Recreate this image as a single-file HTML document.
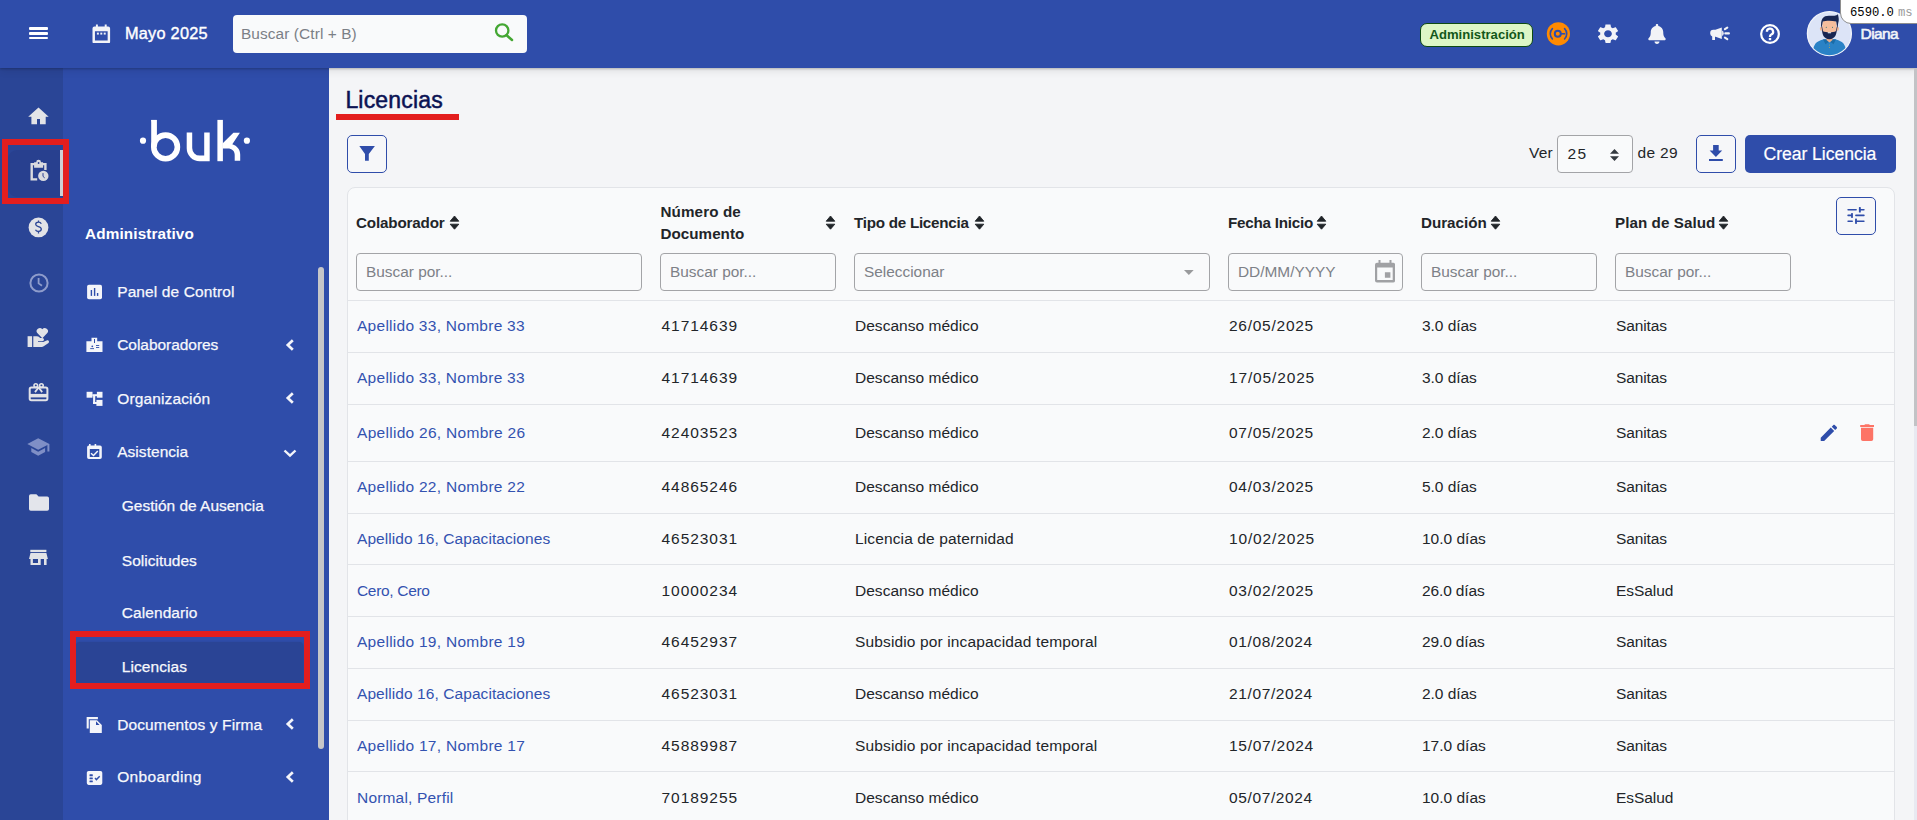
<!DOCTYPE html>
<html lang="es"><head><meta charset="utf-8"><title>Licencias</title>
<style>
html,body{margin:0;padding:0;width:1917px;height:820px;overflow:hidden;background:#F4F5F7;font-family:"Liberation Sans",sans-serif;}
.t{position:absolute;white-space:nowrap;line-height:1;}
#hdr{position:absolute;left:0;top:0;width:1917px;height:68px;background:#2F4DAA;box-shadow:0 1px 2px rgba(0,0,0,.22),0 3px 8px rgba(0,0,0,.09);z-index:0}
#rail{position:absolute;left:0;top:68px;width:63px;height:752px;background:#2A4596}
#side{position:absolute;left:63px;top:68px;width:266px;height:752px;background:#2F4DAA}
#main{position:absolute;left:329px;top:68px;width:1588px;height:752px;background:#F4F5F7}
.btno{position:absolute;border:1px solid #2F4DAA;border-radius:5px;background:#F6F7F9}
</style></head><body>
<div id="rail"></div><div id="side"></div><div id="main"></div><div id="hdr"></div><div style="position:absolute;left:29.4px;top:27.4px;width:18.4px;height:2.5px;background:#fff;border-radius:1px"></div><div style="position:absolute;left:29.4px;top:32.2px;width:18.4px;height:2.5px;background:#fff;border-radius:1px"></div><div style="position:absolute;left:29.4px;top:36.9px;width:18.4px;height:2.5px;background:#fff;border-radius:1px"></div><svg style="position:absolute;left:92.2px;top:23.6px" width="18.6" height="19.6" viewBox="0 0 19 20" preserveAspectRatio="none">
<path fill="#F2F3F7" d="M4 0.5h2v2h7v-2h2v2h1.5a2 2 0 0 1 2 2v13.5a2 2 0 0 1-2 2h-14a2 2 0 0 1-2-2v-13.5a2 2 0 0 1 2-2h1.5z M3 7.3v9.6h13v-9.6z"/>
<rect x="5" y="8.8" width="2" height="2" fill="#F2F3F7"/><rect x="8.5" y="8.8" width="2" height="2" fill="#F2F3F7"/><rect x="12" y="8.8" width="2" height="2" fill="#F2F3F7"/>
</svg><div class="t" style="left:125px;top:25px;font-size:16.3px;color:#fff;font-weight:normal;-webkit-text-stroke:0.4px #fff;letter-spacing:0.250px;">Mayo 2025</div>
<div style="position:absolute;left:233px;top:15px;width:294px;height:38px;background:#F9FAFB;border-radius:4px"></div><div class="t" style="left:241px;top:26px;font-size:15.4px;color:#7B7F86;font-weight:normal;letter-spacing:0.097px;">Buscar (Ctrl + B)</div>
<svg style="position:absolute;left:494px;top:22px" width="21" height="21" viewBox="0 0 21 21">
<circle cx="8.2" cy="8.5" r="6.2" fill="none" stroke="#44A733" stroke-width="2.3"/>
<path d="M12.6 13.3l5.4 4.7" stroke="#44A733" stroke-width="2.5" stroke-linecap="round"/>
</svg><div style="position:absolute;left:1419.5px;top:23.2px;width:111px;height:21.4px;background:#DDF6C6;border:1px solid #0E4A12;border-radius:7px"></div><div class="t" style="left:1429.5px;top:28px;font-size:13.1px;color:#13571A;font-weight:bold;">Administración</div>
<svg style="position:absolute;left:0;top:0" width="1917" height="68">
<circle cx="1558.4" cy="33.8" r="11.6" fill="#FF8A00"/>
<path d="M1552.4 28.6a7.4 7.4 0 0 0 0 10.4 M1564.6 28.6a7.4 7.4 0 0 1 0 10.4" fill="none" stroke="#2F4DAA" stroke-width="1.6" stroke-linecap="round"/>
<circle cx="1557.8" cy="33.8" r="3" fill="none" stroke="#2F4DAA" stroke-width="2"/>
<path d="M1560.8 33.8h4.5" stroke="#2F4DAA" stroke-width="1.6"/>
</svg><svg style="position:absolute;left:1597.7px;top:23.9px" width="20" height="19.4" viewBox="2.74 2 18.52 20" preserveAspectRatio="none">
<path fill="#F2F3F7" d="M19.14 12.94c.04-.3.06-.61.06-.94 0-.32-.02-.64-.07-.94l2.03-1.58c.18-.14.23-.41.12-.61l-1.92-3.32c-.12-.22-.37-.29-.59-.22l-2.39.96c-.5-.38-1.03-.7-1.62-.94l-.36-2.54c-.04-.24-.24-.41-.48-.41h-3.84c-.24 0-.43.17-.47.41l-.36 2.54c-.59.24-1.13.57-1.62.94l-2.39-.96c-.22-.08-.47 0-.59.22L2.74 8.87c-.12.21-.08.47.12.61l2.03 1.58c-.05.3-.09.63-.09.94s.02.64.07.94l-2.03 1.58c-.18.14-.23.41-.12.61l1.92 3.32c.12.22.37.29.59.22l2.39-.96c.5.38 1.03.7 1.62.94l.36 2.54c.05.24.24.41.48.41h3.84c.24 0 .44-.17.47-.41l.36-2.54c.59-.24 1.13-.56 1.62-.94l2.39.96c.22.08.47 0 .59-.22l1.92-3.32c.12-.22.07-.47-.12-.61l-2.01-1.58zM12 15.6c-1.98 0-3.6-1.62-3.6-3.6s1.62-3.6 3.6-3.6 3.6 1.62 3.6 3.6-1.62 3.6-3.6 3.6z"/>
</svg><svg style="position:absolute;left:1648px;top:23.5px" width="18" height="20" viewBox="0 0 448 512">
<path fill="#F2F3F7" d="M224 512c35.32 0 63.97-28.65 63.97-64H160.03c0 35.35 28.65 64 63.97 64zm215.39-149.71c-19.32-20.76-55.47-51.99-55.47-154.29 0-77.7-54.48-139.9-127.94-155.16V32c0-17.67-14.32-32-31.98-32s-31.98 14.33-31.98 32v20.84C118.56 68.1 64.08 130.3 64.08 208c0 102.3-36.15 133.53-55.47 154.29-6 6.45-8.66 14.16-8.61 21.71.11 16.4 12.98 32 32.1 32h383.8c19.12 0 32-15.6 32.1-32 .05-7.55-2.61-15.27-8.61-21.71z"/>
</svg><svg style="position:absolute;left:1710px;top:25.5px" width="21" height="16" viewBox="0 0 21 16">
<path fill="#F2F3F7" d="M0.2 7a3.2 3.2 0 0 1 3.2-3.2h2l6.4-2.3v11.6l-6.2-2.4h-0.6v3.3h-2.8v-3.6a3.2 3.2 0 0 1-2-3z"/>
<path fill="#DDE0EA" d="M12 4.6a2.9 2.9 0 0 1 0 5.4z"/>
<path d="M14.9 3.2l2.4-1.6M15.3 7.4h3.6M14.9 11.6l2.4 1.6" stroke="#F2F3F7" stroke-width="2.1" stroke-linecap="round"/>
</svg><svg style="position:absolute;left:1759.5px;top:23.7px" width="20" height="20" viewBox="0 0 20 20">
<circle cx="10" cy="10" r="8.85" fill="none" stroke="#fff" stroke-width="2.2"/>
<path d="M6.9 7.7a3.1 3.1 0 1 1 4.4 2.8c-.9.4-1.3 1-1.3 1.9v.5" fill="none" stroke="#fff" stroke-width="2.3"/>
<rect x="8.8" y="14" width="2.4" height="2.2" fill="#fff"/>
</svg><svg style="position:absolute;left:0;top:0" width="1917" height="68">
<defs><clipPath id="av"><circle cx="1829.4" cy="33.6" r="21.6"/></clipPath></defs>
<circle cx="1829.4" cy="33.6" r="22" fill="#DCE4F7" stroke="#F0F3FA" stroke-width="1.3"/>
<g clip-path="url(#av)">
<path d="M1812 58 C1812.5 44 1816 41.5 1823 39.5 h13 C1843 41.5 1846.5 44 1847 58z" fill="#2A82C6"/>
<path d="M1823 39.3 h13 l-2.5 5 l-4-3 l-4 3z" fill="#1A6CA8"/>
<circle cx="1829.4" cy="45" r="0.5" fill="#C9A94A"/><circle cx="1829.4" cy="47.5" r="0.5" fill="#C9A94A"/>
<path d="M1826.5 35h6v5l-3 2.5-3-2.5z" fill="#EBAE8C"/>
<ellipse cx="1821.3" cy="28.8" rx="1.4" ry="2" fill="#EFB493"/><ellipse cx="1837.5" cy="28.8" rx="1.4" ry="2" fill="#EFB493"/>
<rect x="1822.3" y="18.5" width="14.2" height="18" rx="6" fill="#F5BD9C"/>
<path d="M1822 26 C1821.5 35 1824 39 1829.4 39.2 C1834.8 39 1837.3 35 1836.8 26 L1835.8 31.2 C1833 32.5 1826 32.5 1823 31.2z" fill="#182652"/>
<path d="M1821.3 29 C1820 18 1823.5 15.6 1829.5 15.8 C1833.5 15.6 1836 16 1838 14.2 C1838.3 17 1839.5 19 1838.2 23 L1837.5 29 L1836.2 21.5 C1832 20.5 1826 20.5 1822.8 21.5z" fill="#182652"/>
<rect x="1827.7" y="32.3" width="3.4" height="1" rx="0.5" fill="#fff"/>
<circle cx="1826.3" cy="27.2" r="0.55" fill="#1F6E70"/><circle cx="1832.5" cy="27.2" r="0.55" fill="#1F6E70"/>
</g></svg><div class="t" style="left:1860.6px;top:26px;font-size:15.5px;color:#F2F3F8;font-weight:normal;-webkit-text-stroke:0.6px #F2F3F8;letter-spacing:-0.644px;">Diana</div>
<div style="position:absolute;left:1840px;top:-1px;width:80px;height:23px;background:#fff;border:1px solid #8E8E8E;border-radius:0 0 0 11px;"></div><div class="t" style="left:1850px;top:7px;font-size:12.2px;color:#000;font-weight:normal;font-family:'Liberation Mono',monospace;">6590.0<span style="color:#9A9A9A;margin-left:4px">ms</span></div>
<div style="position:absolute;left:8px;top:149.5px;width:55px;height:47px;background:#28408F;border-radius:9px 0 0 9px"></div><div style="position:absolute;left:59.5px;top:150px;width:3px;height:46px;background:#CFCFD3"></div><svg style="position:absolute;left:0;top:0" width="63" height="600"><path fill="#E2E3E7" d="M38.5 107.4 L28.2 116.8 h3.2 v7.5 h5.6 v-5.4 h3 v5.4 h5.7 v-7.5 h3z"/></svg><svg style="position:absolute;left:0;top:0" width="63" height="600">
<path fill="none" stroke="#DADBDF" stroke-width="2.4" d="M35 164.1h-3.3v15.3h5.5 M42 164.1h3.4v5.9"/>
<path fill="#DADBDF" d="M36.2 162.2a2.4 2.4 0 0 1 4.8 0h2.1v5.6h-9v-5.6z"/>
<circle cx="38.6" cy="163" r="0.9" fill="#2A4093"/>
<circle cx="43.3" cy="175.9" r="5.2" fill="#DADBDF"/>
<path d="M43 173.1v3.3l1.7 1.5" fill="none" stroke="#2A4093" stroke-width="1"/>
</svg><svg style="position:absolute;left:0;top:0" width="63" height="600">
<circle cx="38.5" cy="227.4" r="9.9" fill="#E2E3E7"/>
<path d="M41.3 223.8c-.5-1-1.5-1.7-2.8-1.7-1.6 0-2.8.9-2.8 2.2 0 2.9 5.6 1.7 5.6 4.8 0 1.3-1.2 2.4-2.9 2.4-1.4 0-2.5-.7-2.9-1.7M38.5 220.5v1.6M38.5 232v1.6" fill="none" stroke="#2A4596" stroke-width="1.3"/>
</svg><svg style="position:absolute;left:28.5px;top:272.5px" width="20" height="20" viewBox="0 0 20 20">
<circle cx="10" cy="10" r="8.6" fill="none" stroke="#8E9CCB" stroke-width="2"/>
<path d="M9.6 5v5.4l3.4 2.4" fill="none" stroke="#8E9CCB" stroke-width="1.8"/>
</svg><svg style="position:absolute;left:0;top:0" width="63" height="600">
<path fill="#E2E3E7" d="M42.3 338.3 l-5-5.2 a2.9 2.9 0 0 1 5-3.8 a2.9 2.9 0 0 1 5 3.8z"/>
<rect x="27.6" y="336.2" width="4.5" height="10.8" fill="#E2E3E7"/>
<path fill="#E2E3E7" d="M33.3 336.3h3.8c1.2 0 2.3.9 2.9 1.6h2.3a1.7 1.7 0 0 1 0 3.4h-4.3v.6h5.2l4-1.6a1.5 1.5 0 0 1 1.3 2.6l-4.8 3.3a3.6 3.6 0 0 1-2 .7h-8.4z"/>
</svg><svg style="position:absolute;left:0;top:0" width="63" height="600">
<rect x="29.7" y="387.6" width="17.7" height="12.6" rx="1.6" fill="none" stroke="#E2E3E7" stroke-width="2"/>
<rect x="29.7" y="393.9" width="17.7" height="3.5" fill="#E2E3E7"/>
<circle cx="35.8" cy="385.6" r="1.8" fill="none" stroke="#E2E3E7" stroke-width="1.6"/>
<circle cx="41.4" cy="385.6" r="1.8" fill="none" stroke="#E2E3E7" stroke-width="1.6"/>
<path d="M38.6 387.5l-3.6 4.6 M38.6 387.5l3.6 4.6" stroke="#E2E3E7" stroke-width="1.8"/>
</svg><svg style="position:absolute;left:27px;top:438px" width="23" height="18" viewBox="0 0 23 18">
<path fill="#7F8FC6" d="M11.2 0.3 L0.3 6 l10.9 5.7 l9.2-4.8 v6.6 h2 v-7.5z M4.3 10.1 v4 l6.9 3.6 l6.9-3.6 v-4 l-6.9 3.6z"/>
</svg><svg style="position:absolute;left:28.5px;top:494px;opacity:1" width="20" height="17" viewBox="0 0 20 17"><path fill="#E3E5EB" d="M1.8 0.3h5.6l2.2 2.2h8.6a1.8 1.8 0 0 1 1.8 1.8v10.6a1.8 1.8 0 0 1-1.8 1.8h-16.4a1.8 1.8 0 0 1-1.8-1.8v-12.8a1.8 1.8 0 0 1 1.8-1.8z"/></svg>
<svg style="position:absolute;left:0;top:0" width="63" height="600">
<rect x="30.3" y="549.8" width="16.1" height="2.3" fill="#E2E3E7"/>
<path fill="#E2E3E7" d="M30.5 552.9h15.9l1.5 6.2h-18.9z"/>
<path fill="#E2E3E7" d="M30.5 559h2.4v6.1h-2.4z M44 559h2.6v6.1h-2.6z M30.5 563h10.2v2.1h-10.2z M38 559h2.7v6h-2.7z"/>
</svg><div style="position:absolute;left:2px;top:139px;width:55px;height:53px;border:6px solid #E31E1E"></div><div style="position:absolute;left:318px;top:267px;width:6px;height:482px;background:#C6C6C8;border-radius:3px"></div><svg style="position:absolute;left:130px;top:110px" width="130" height="60" viewBox="0 0 130 60">
<circle cx="13" cy="30.7" r="3.1" fill="#fff"/>
<circle cx="116.9" cy="30.7" r="3.1" fill="#fff"/>
<path d="M21.2 9.9h5.5v18.5" fill="#fff"/>
<rect x="21.2" y="9.9" width="5.5" height="27" fill="#fff"/>
<circle cx="35.6" cy="36.9" r="11.8" fill="none" stroke="#fff" stroke-width="5.6"/>
<path d="M56.7 22.6h5.5v15.5a7.5 7.5 0 0 0 7.5 7.5h4.5v-23h5.5v28.6h-10a13 13 0 0 1-13-13z" fill="#fff"/>
<rect x="87.4" y="9.9" width="5.5" height="41.3" fill="#fff"/>
<path d="M92.5 33.6L103.4 22.7H109.9L102.3 34.2C107.2 35.8 110.2 39.6 110.2 44.5V50.8H104.7V44.8C104.7 40.8 101.8 38.4 97.8 38.4H92.5Z" fill="#fff"/>
</svg><div class="t" style="left:85px;top:226px;font-size:15.3px;color:#fff;font-weight:bold;letter-spacing:0.135px;">Administrativo</div>
<div class="t" style="left:117.2px;top:284px;font-size:15.5px;color:#F7F8FC;font-weight:normal;-webkit-text-stroke:0.25px #F7F8FC;letter-spacing:0.112px;">Panel de Control</div>
<div class="t" style="left:117.2px;top:337px;font-size:15.5px;color:#F7F8FC;font-weight:normal;-webkit-text-stroke:0.25px #F7F8FC;letter-spacing:-0.044px;">Colaboradores</div>
<div class="t" style="left:117.2px;top:391px;font-size:15.5px;color:#F7F8FC;font-weight:normal;-webkit-text-stroke:0.25px #F7F8FC;letter-spacing:0.136px;">Organización</div>
<div class="t" style="left:117.2px;top:444px;font-size:15.5px;color:#F7F8FC;font-weight:normal;-webkit-text-stroke:0.25px #F7F8FC;letter-spacing:0.042px;">Asistencia</div>
<div style="position:absolute;left:76px;top:642px;width:227px;height:43px;background:#2A4495;border-radius:4px;box-shadow:0 1px 3px rgba(0,0,0,.25)"></div><div class="t" style="left:121.8px;top:498px;font-size:15.5px;color:#F7F8FC;font-weight:normal;-webkit-text-stroke:0.25px #F7F8FC;letter-spacing:-0.012px;">Gestión de Ausencia</div>
<div class="t" style="left:121.8px;top:553px;font-size:15.5px;color:#F7F8FC;font-weight:normal;-webkit-text-stroke:0.25px #F7F8FC;letter-spacing:0.009px;">Solicitudes</div>
<div class="t" style="left:121.8px;top:605px;font-size:15.5px;color:#F7F8FC;font-weight:normal;-webkit-text-stroke:0.25px #F7F8FC;letter-spacing:0.073px;">Calendario</div>
<div class="t" style="left:121.8px;top:659px;font-size:15.5px;color:#F7F8FC;font-weight:normal;-webkit-text-stroke:0.25px #F7F8FC;letter-spacing:0.066px;">Licencias</div>
<div class="t" style="left:117.2px;top:717px;font-size:15.5px;color:#F7F8FC;font-weight:normal;-webkit-text-stroke:0.25px #F7F8FC;letter-spacing:0.120px;">Documentos y Firma</div>
<div class="t" style="left:117.2px;top:769px;font-size:15.5px;color:#F7F8FC;font-weight:normal;-webkit-text-stroke:0.25px #F7F8FC;letter-spacing:0.357px;">Onboarding</div>
<svg style="position:absolute;left:0;top:0" width="329" height="820">
<rect x="87.1" y="284.8" width="14.9" height="14.4" rx="1.8" fill="#F4F5FA"/>
<rect x="90.7" y="290" width="1.4" height="5.9" fill="#2F4DAA"/><rect x="93.9" y="288" width="1.4" height="7.9" fill="#2F4DAA"/><rect x="96.9" y="293" width="1.4" height="2.9" fill="#2F4DAA"/>
<path fill="#F4F5FA" d="M86.4 341.2h5.1v-3.5h5.7v3.5h5.3v10.8h-16.1z"/>
<rect x="94" y="339" width="1" height="4" fill="#2F4DAA"/>
<circle cx="92.3" cy="346.3" r="0.9" fill="#2F4DAA"/><rect x="90.2" y="348.2" width="3.8" height="0.9" fill="#2F4DAA"/>
<rect x="96" y="345" width="3.2" height="0.9" fill="#2F4DAA"/><rect x="96" y="347" width="3.2" height="0.9" fill="#2F4DAA"/>
<rect x="86.6" y="391.8" width="5.9" height="5.9" fill="#F4F5FA"/><rect x="96.9" y="391.8" width="5.6" height="5.9" fill="#F4F5FA"/>
<rect x="92.4" y="394.2" width="4.6" height="2" fill="#F4F5FA"/>
<rect x="93.1" y="396" width="2.1" height="8" fill="#F4F5FA"/><rect x="93.1" y="402" width="4" height="2" fill="#F4F5FA"/>
<rect x="96.4" y="399.9" width="6.1" height="6" fill="#F4F5FA"/>
<path fill="#F4F5FA" d="M89 443.9h1.6v1.6h4v-1.6h1.6v1.6h3.8a1.8 1.8 0 0 1 1.8 1.8v10a1.8 1.8 0 0 1-1.8 1.8h-11.1a1.8 1.8 0 0 1-1.8-1.8v-10a1.8 1.8 0 0 1 1.8-1.8h.1z M89.8 449.1v7.8h9.5v-7.8z"/>
<path d="M91 453.3l2.5 2.2 4.3-4.4" fill="none" stroke="#F4F5FA" stroke-width="1.5"/>
<path d="M87.7 728.6v-10.5h10.2" fill="none" stroke="#F4F5FA" stroke-width="2.1"/>
<path fill="#F4F5FA" d="M89.8 720.2h7.2l4.8 4.8v7.9h-12z M96 721.2v3.8h3.6z" fill-rule="evenodd"/>
<rect x="86.8" y="771" width="15.5" height="13.9" rx="1.8" fill="#F4F5FA"/>
<rect x="89.5" y="774.3" width="3.3" height="1.9" rx="0.5" fill="#2F4DAA"/><rect x="89.5" y="777.4" width="3.3" height="1.9" rx="0.5" fill="#2F4DAA"/><rect x="89.5" y="780.4" width="3.3" height="1.9" rx="0.5" fill="#2F4DAA"/>
<path d="M95 778l1.4 1.6 3.3-3.4" fill="none" stroke="#2F4DAA" stroke-width="1.4"/>
</svg><svg style="position:absolute;left:284.5px;top:338.7px" width="10" height="12" viewBox="0 0 10 12"><path d="M7.8 1.2L2.8 6l5 4.8" fill="none" stroke="#F4F5FA" stroke-width="2.7"/></svg>
<svg style="position:absolute;left:284.5px;top:392.3px" width="10" height="12" viewBox="0 0 10 12"><path d="M7.8 1.2L2.8 6l5 4.8" fill="none" stroke="#F4F5FA" stroke-width="2.7"/></svg>
<svg style="position:absolute;left:284.5px;top:718px" width="10" height="12" viewBox="0 0 10 12"><path d="M7.8 1.2L2.8 6l5 4.8" fill="none" stroke="#F4F5FA" stroke-width="2.7"/></svg>
<svg style="position:absolute;left:284.5px;top:771px" width="10" height="12" viewBox="0 0 10 12"><path d="M7.8 1.2L2.8 6l5 4.8" fill="none" stroke="#F4F5FA" stroke-width="2.7"/></svg>
<svg style="position:absolute;left:283px;top:447.5px" width="14" height="10" viewBox="0 0 14 10"><path d="M1.5 2.5l5.5 5.2 5.5-5.2" fill="none" stroke="#F4F5FA" stroke-width="2.4"/></svg><div style="position:absolute;left:70px;top:631px;width:227.7px;height:46px;border:6px solid #E31E1E"></div><div style="position:absolute;left:1914px;top:68px;width:3px;height:358px;background:#C2C3C6"></div><div style="position:absolute;left:1914px;top:426px;width:3px;height:394px;background:#E8E9F1"></div><div class="t" style="left:345.4px;top:89px;font-size:23px;color:#0B1354;font-weight:normal;-webkit-text-stroke:0.5px #0B1354;letter-spacing:0.177px;">Licencias</div>
<div style="position:absolute;left:335.5px;top:113.5px;width:123px;height:6px;background:#E31E1E"></div><div class="btno" style="left:347px;top:135px;width:38px;height:36px"></div><svg style="position:absolute;left:359px;top:146px" width="16" height="16" viewBox="0 0 16 16"><path fill="#2F4DAA" d="M0.3 0h15.6l-6.1 8v6.8h-3.8v-6.8z"/></svg><div class="t" style="left:1529px;top:145px;font-size:15.5px;color:#222529;font-weight:normal;letter-spacing:0.198px;">Ver</div>
<div style="position:absolute;left:1557px;top:135px;width:74px;height:36px;border:1px solid #A3A4A7;border-radius:4px;background:#F9FAFB"></div><div class="t" style="left:1567.5px;top:146px;font-size:15.5px;color:#222529;font-weight:normal;letter-spacing:1.380px;">25</div>
<svg style="position:absolute;left:1610px;top:148.5px" width="9" height="12" viewBox="0 0 9 12"><path fill="#343A40" d="M4.5 0L9 4.8H0z M4.5 12L9 7.2H0z"/></svg><div class="t" style="left:1637.5px;top:145px;font-size:15.5px;color:#222529;font-weight:normal;letter-spacing:0.308px;">de 29</div>
<div class="btno" style="left:1696px;top:135px;width:38px;height:36px"></div><svg style="position:absolute;left:1709.2px;top:145px" width="14" height="16" viewBox="0 0 14 16"><path fill="#2F4DAA" d="M4.1 0h5.6v5.5h3.5l-6.3 6.6-6.3-6.6h3.5z M0 14.1h13.8v1.9h-13.8z"/></svg><div style="position:absolute;left:1745px;top:135px;width:151px;height:38px;background:#2F4DAA;border-radius:5px"></div><div class="t" style="left:1763.5px;top:146px;font-size:17.6px;color:#fff;font-weight:normal;-webkit-text-stroke:0.2px #fff;letter-spacing:-0.050px;">Crear Licencia</div>
<div style="position:absolute;left:346.5px;top:187px;width:1546.3px;height:700px;background:#F9FAFB;border:1px solid #E2E4E8;border-radius:8px"></div><div class="btno" style="left:1836px;top:197px;width:38px;height:36px"></div><svg style="position:absolute;left:0;top:0" width="1917" height="260">
<g fill="#2F4DAA">
<rect x="1847.3" y="208.9" width="9.6" height="1.7" rx="0.8"/><rect x="1858.9" y="207.1" width="1.9" height="5.5" rx="0.6"/><rect x="1858.9" y="208.9" width="5.8" height="1.7" rx="0.8"/>
<rect x="1847.3" y="214.6" width="5" height="1.7" rx="0.8"/><rect x="1851.1" y="212.9" width="1.8" height="5" rx="0.6"/><rect x="1855.1" y="214.6" width="9.6" height="1.7" rx="0.8"/>
<rect x="1847.3" y="220.4" width="5.7" height="1.7" rx="0.8"/><rect x="1855.1" y="218.4" width="1.8" height="5.5" rx="0.6"/><rect x="1855.1" y="220.4" width="9.6" height="1.7" rx="0.8"/>
</g></svg><div class="t" style="left:356px;top:215px;font-size:15.2px;color:#222529;font-weight:bold;letter-spacing:-0.158px;">Colaborador</div>
<svg style="position:absolute;left:449.2px;top:214.5px" width="11" height="15" viewBox="0 0 11 15"><path fill="#212529" stroke="#212529" stroke-width="0.9" stroke-linejoin="round" d="M5.5 1 L9.8 6.2 H1.2z M1.2 9.2 H9.8 L5.5 14.2z"/></svg>
<div class="t" style="left:660.5px;top:204px;font-size:15.2px;color:#222529;font-weight:bold;letter-spacing:0.115px;">Número de</div>
<div class="t" style="left:660.5px;top:226px;font-size:15.2px;color:#222529;font-weight:bold;letter-spacing:0.031px;">Documento</div>
<svg style="position:absolute;left:825.3px;top:214.5px" width="11" height="15" viewBox="0 0 11 15"><path fill="#212529" stroke="#212529" stroke-width="0.9" stroke-linejoin="round" d="M5.5 1 L9.8 6.2 H1.2z M1.2 9.2 H9.8 L5.5 14.2z"/></svg>
<div class="t" style="left:854px;top:215px;font-size:15.2px;color:#222529;font-weight:bold;letter-spacing:-0.258px;">Tipo de Licencia</div>
<svg style="position:absolute;left:974.1px;top:214.5px" width="11" height="15" viewBox="0 0 11 15"><path fill="#212529" stroke="#212529" stroke-width="0.9" stroke-linejoin="round" d="M5.5 1 L9.8 6.2 H1.2z M1.2 9.2 H9.8 L5.5 14.2z"/></svg>
<div class="t" style="left:1228px;top:215px;font-size:15.2px;color:#222529;font-weight:bold;letter-spacing:-0.227px;">Fecha Inicio</div>
<svg style="position:absolute;left:1315.9px;top:214.5px" width="11" height="15" viewBox="0 0 11 15"><path fill="#212529" stroke="#212529" stroke-width="0.9" stroke-linejoin="round" d="M5.5 1 L9.8 6.2 H1.2z M1.2 9.2 H9.8 L5.5 14.2z"/></svg>
<div class="t" style="left:1421px;top:215px;font-size:15.2px;color:#222529;font-weight:bold;letter-spacing:-0.021px;">Duración</div>
<svg style="position:absolute;left:1490.0px;top:214.5px" width="11" height="15" viewBox="0 0 11 15"><path fill="#212529" stroke="#212529" stroke-width="0.9" stroke-linejoin="round" d="M5.5 1 L9.8 6.2 H1.2z M1.2 9.2 H9.8 L5.5 14.2z"/></svg>
<div class="t" style="left:1615px;top:215px;font-size:15.2px;color:#222529;font-weight:bold;letter-spacing:0.058px;">Plan de Salud</div>
<svg style="position:absolute;left:1717.7px;top:214.5px" width="11" height="15" viewBox="0 0 11 15"><path fill="#212529" stroke="#212529" stroke-width="0.9" stroke-linejoin="round" d="M5.5 1 L9.8 6.2 H1.2z M1.2 9.2 H9.8 L5.5 14.2z"/></svg>
<div style="position:absolute;left:356px;top:253px;width:284px;height:36px;border:1px solid #A3A4A7;border-radius:4px;background:#F9FAFB"></div>
<div class="t" style="left:366px;top:264px;font-size:15.4px;color:#7D8187;font-weight:normal;">Buscar por...</div>
<div style="position:absolute;left:660px;top:253px;width:174px;height:36px;border:1px solid #A3A4A7;border-radius:4px;background:#F9FAFB"></div>
<div class="t" style="left:670px;top:264px;font-size:15.4px;color:#7D8187;font-weight:normal;">Buscar por...</div>
<div style="position:absolute;left:854px;top:253px;width:354px;height:36px;border:1px solid #A3A4A7;border-radius:4px;background:#F9FAFB"></div>
<div class="t" style="left:864px;top:264px;font-size:15.4px;color:#7D8187;font-weight:normal;">Seleccionar</div>
<svg style="position:absolute;left:1184px;top:270px" width="10" height="5" viewBox="0 0 10 5"><path fill="#999A9C" d="M0 0h9.7L4.85 4.9z"/></svg><div style="position:absolute;left:1228px;top:253px;width:173px;height:36px;border:1px solid #A3A4A7;border-radius:4px;background:#F9FAFB"></div>
<div class="t" style="left:1238px;top:264px;font-size:15.4px;color:#7D8187;font-weight:normal;">DD/MM/YYYY</div>
<svg style="position:absolute;left:1374.5px;top:260.2px" width="20.1" height="22.5" viewBox="0 0 20.1 22.5"><path fill="#A0A1A4" fill-rule="evenodd" d="M3.5 0h2v2.7h9v-2.7h2v2.7h1.6a2 2 0 0 1 2 2v15.8a2 2 0 0 1-2 2h-16.1a2 2 0 0 1-2-2v-15.8a2 2 0 0 1 2-2h1.5z M2.2 7.6v12.4h15.5v-12.4z M9.9 12.3h5.5v5.5h-5.5z"/></svg><div style="position:absolute;left:1421px;top:253px;width:174px;height:36px;border:1px solid #A3A4A7;border-radius:4px;background:#F9FAFB"></div>
<div class="t" style="left:1431px;top:264px;font-size:15.4px;color:#7D8187;font-weight:normal;">Buscar por...</div>
<div style="position:absolute;left:1615px;top:253px;width:174px;height:36px;border:1px solid #A3A4A7;border-radius:4px;background:#F9FAFB"></div>
<div class="t" style="left:1625px;top:264px;font-size:15.4px;color:#7D8187;font-weight:normal;">Buscar por...</div>
<div style="position:absolute;left:348px;top:300.0px;width:1546px;height:1.3px;background:#E2E4E8"></div><div style="position:absolute;left:348px;top:351.5px;width:1546px;height:1.3px;background:#E2E4E8"></div><div style="position:absolute;left:348px;top:404.0px;width:1546px;height:1.3px;background:#E2E4E8"></div><div style="position:absolute;left:348px;top:461.0px;width:1546px;height:1.3px;background:#E2E4E8"></div><div style="position:absolute;left:348px;top:513.0px;width:1546px;height:1.3px;background:#E2E4E8"></div><div style="position:absolute;left:348px;top:564.0px;width:1546px;height:1.3px;background:#E2E4E8"></div><div style="position:absolute;left:348px;top:615.5px;width:1546px;height:1.3px;background:#E2E4E8"></div><div style="position:absolute;left:348px;top:667.5px;width:1546px;height:1.3px;background:#E2E4E8"></div><div style="position:absolute;left:348px;top:720.0px;width:1546px;height:1.3px;background:#E2E4E8"></div><div style="position:absolute;left:348px;top:771.2px;width:1546px;height:1.3px;background:#E2E4E8"></div><div class="t" style="left:357px;top:318px;font-size:15.5px;color:#3352B0;font-weight:normal;letter-spacing:0.268px;">Apellido 33, Nombre 33</div>
<div class="t" style="left:661.5px;top:318px;font-size:15.5px;color:#222529;font-weight:normal;letter-spacing:0.951px;">41714639</div>
<div class="t" style="left:855px;top:318px;font-size:15.5px;color:#222529;font-weight:normal;letter-spacing:0.030px;">Descanso médico</div>
<div class="t" style="left:1229px;top:318px;font-size:15.5px;color:#222529;font-weight:normal;letter-spacing:0.738px;">26/05/2025</div>
<div class="t" style="left:1422px;top:318px;font-size:15.5px;color:#222529;font-weight:normal;letter-spacing:-0.057px;">3.0 días</div>
<div class="t" style="left:1616px;top:318px;font-size:15.5px;color:#222529;font-weight:normal;letter-spacing:-0.125px;">Sanitas</div>
<div class="t" style="left:357px;top:370px;font-size:15.5px;color:#3352B0;font-weight:normal;letter-spacing:0.268px;">Apellido 33, Nombre 33</div>
<div class="t" style="left:661.5px;top:370px;font-size:15.5px;color:#222529;font-weight:normal;letter-spacing:0.951px;">41714639</div>
<div class="t" style="left:855px;top:370px;font-size:15.5px;color:#222529;font-weight:normal;letter-spacing:0.030px;">Descanso médico</div>
<div class="t" style="left:1229px;top:370px;font-size:15.5px;color:#222529;font-weight:normal;letter-spacing:0.849px;">17/05/2025</div>
<div class="t" style="left:1422px;top:370px;font-size:15.5px;color:#222529;font-weight:normal;letter-spacing:-0.057px;">3.0 días</div>
<div class="t" style="left:1616px;top:370px;font-size:15.5px;color:#222529;font-weight:normal;letter-spacing:-0.125px;">Sanitas</div>
<div class="t" style="left:357px;top:425px;font-size:15.5px;color:#3352B0;font-weight:normal;letter-spacing:0.287px;">Apellido 26, Nombre 26</div>
<div class="t" style="left:661.5px;top:425px;font-size:15.5px;color:#222529;font-weight:normal;letter-spacing:0.951px;">42403523</div>
<div class="t" style="left:855px;top:425px;font-size:15.5px;color:#222529;font-weight:normal;letter-spacing:0.030px;">Descanso médico</div>
<div class="t" style="left:1229px;top:425px;font-size:15.5px;color:#222529;font-weight:normal;letter-spacing:0.738px;">07/05/2025</div>
<div class="t" style="left:1422px;top:425px;font-size:15.5px;color:#222529;font-weight:normal;letter-spacing:-0.057px;">2.0 días</div>
<div class="t" style="left:1616px;top:425px;font-size:15.5px;color:#222529;font-weight:normal;letter-spacing:-0.125px;">Sanitas</div>
<div class="t" style="left:357px;top:479px;font-size:15.5px;color:#3352B0;font-weight:normal;letter-spacing:0.278px;">Apellido 22, Nombre 22</div>
<div class="t" style="left:661.5px;top:479px;font-size:15.5px;color:#222529;font-weight:normal;letter-spacing:0.951px;">44865246</div>
<div class="t" style="left:855px;top:479px;font-size:15.5px;color:#222529;font-weight:normal;letter-spacing:0.030px;">Descanso médico</div>
<div class="t" style="left:1229px;top:479px;font-size:15.5px;color:#222529;font-weight:normal;letter-spacing:0.738px;">04/03/2025</div>
<div class="t" style="left:1422px;top:479px;font-size:15.5px;color:#222529;font-weight:normal;letter-spacing:-0.057px;">5.0 días</div>
<div class="t" style="left:1616px;top:479px;font-size:15.5px;color:#222529;font-weight:normal;letter-spacing:-0.125px;">Sanitas</div>
<div class="t" style="left:357px;top:531px;font-size:15.5px;color:#3352B0;font-weight:normal;letter-spacing:0.072px;">Apellido 16, Capacitaciones</div>
<div class="t" style="left:661.5px;top:531px;font-size:15.5px;color:#222529;font-weight:normal;letter-spacing:0.951px;">46523031</div>
<div class="t" style="left:855px;top:531px;font-size:15.5px;color:#222529;font-weight:normal;letter-spacing:0.126px;">Licencia de paternidad</div>
<div class="t" style="left:1229px;top:531px;font-size:15.5px;color:#222529;font-weight:normal;letter-spacing:0.849px;">10/02/2025</div>
<div class="t" style="left:1422px;top:531px;font-size:15.5px;color:#222529;font-weight:normal;letter-spacing:-0.003px;">10.0 días</div>
<div class="t" style="left:1616px;top:531px;font-size:15.5px;color:#222529;font-weight:normal;letter-spacing:-0.125px;">Sanitas</div>
<div class="t" style="left:357px;top:583px;font-size:15.5px;color:#3352B0;font-weight:normal;letter-spacing:-0.320px;">Cero, Cero</div>
<div class="t" style="left:661.5px;top:583px;font-size:15.5px;color:#222529;font-weight:normal;letter-spacing:0.951px;">10000234</div>
<div class="t" style="left:855px;top:583px;font-size:15.5px;color:#222529;font-weight:normal;letter-spacing:0.030px;">Descanso médico</div>
<div class="t" style="left:1229px;top:583px;font-size:15.5px;color:#222529;font-weight:normal;letter-spacing:0.738px;">03/02/2025</div>
<div class="t" style="left:1422px;top:583px;font-size:15.5px;color:#222529;font-weight:normal;letter-spacing:-0.128px;">26.0 días</div>
<div class="t" style="left:1616px;top:583px;font-size:15.5px;color:#222529;font-weight:normal;letter-spacing:-0.069px;">EsSalud</div>
<div class="t" style="left:357px;top:634px;font-size:15.5px;color:#3352B0;font-weight:normal;letter-spacing:0.278px;">Apellido 19, Nombre 19</div>
<div class="t" style="left:661.5px;top:634px;font-size:15.5px;color:#222529;font-weight:normal;letter-spacing:0.951px;">46452937</div>
<div class="t" style="left:855px;top:634px;font-size:15.5px;color:#222529;font-weight:normal;letter-spacing:0.138px;">Subsidio por incapacidad temporal</div>
<div class="t" style="left:1229px;top:634px;font-size:15.5px;color:#222529;font-weight:normal;letter-spacing:0.627px;">01/08/2024</div>
<div class="t" style="left:1422px;top:634px;font-size:15.5px;color:#222529;font-weight:normal;letter-spacing:-0.128px;">29.0 días</div>
<div class="t" style="left:1616px;top:634px;font-size:15.5px;color:#222529;font-weight:normal;letter-spacing:-0.125px;">Sanitas</div>
<div class="t" style="left:357px;top:686px;font-size:15.5px;color:#3352B0;font-weight:normal;letter-spacing:0.072px;">Apellido 16, Capacitaciones</div>
<div class="t" style="left:661.5px;top:686px;font-size:15.5px;color:#222529;font-weight:normal;letter-spacing:0.951px;">46523031</div>
<div class="t" style="left:855px;top:686px;font-size:15.5px;color:#222529;font-weight:normal;letter-spacing:0.030px;">Descanso médico</div>
<div class="t" style="left:1229px;top:686px;font-size:15.5px;color:#222529;font-weight:normal;letter-spacing:0.627px;">21/07/2024</div>
<div class="t" style="left:1422px;top:686px;font-size:15.5px;color:#222529;font-weight:normal;letter-spacing:-0.057px;">2.0 días</div>
<div class="t" style="left:1616px;top:686px;font-size:15.5px;color:#222529;font-weight:normal;letter-spacing:-0.125px;">Sanitas</div>
<div class="t" style="left:357px;top:738px;font-size:15.5px;color:#3352B0;font-weight:normal;letter-spacing:0.278px;">Apellido 17, Nombre 17</div>
<div class="t" style="left:661.5px;top:738px;font-size:15.5px;color:#222529;font-weight:normal;letter-spacing:0.951px;">45889987</div>
<div class="t" style="left:855px;top:738px;font-size:15.5px;color:#222529;font-weight:normal;letter-spacing:0.138px;">Subsidio por incapacidad temporal</div>
<div class="t" style="left:1229px;top:738px;font-size:15.5px;color:#222529;font-weight:normal;letter-spacing:0.738px;">15/07/2024</div>
<div class="t" style="left:1422px;top:738px;font-size:15.5px;color:#222529;font-weight:normal;letter-spacing:-0.003px;">17.0 días</div>
<div class="t" style="left:1616px;top:738px;font-size:15.5px;color:#222529;font-weight:normal;letter-spacing:-0.125px;">Sanitas</div>
<div class="t" style="left:357px;top:790px;font-size:15.5px;color:#3352B0;font-weight:normal;letter-spacing:0.182px;">Normal, Perfil</div>
<div class="t" style="left:661.5px;top:790px;font-size:15.5px;color:#222529;font-weight:normal;letter-spacing:0.951px;">70189255</div>
<div class="t" style="left:855px;top:790px;font-size:15.5px;color:#222529;font-weight:normal;letter-spacing:0.030px;">Descanso médico</div>
<div class="t" style="left:1229px;top:790px;font-size:15.5px;color:#222529;font-weight:normal;letter-spacing:0.627px;">05/07/2024</div>
<div class="t" style="left:1422px;top:790px;font-size:15.5px;color:#222529;font-weight:normal;letter-spacing:-0.003px;">10.0 días</div>
<div class="t" style="left:1616px;top:790px;font-size:15.5px;color:#222529;font-weight:normal;letter-spacing:-0.069px;">EsSalud</div>
<svg style="position:absolute;left:1817.8px;top:422px" width="21.8" height="21.8" viewBox="0 0 24 24"><path fill="#2F4DAA" d="M3 17.25V21h3.75L17.81 9.94l-3.75-3.75L3 17.25zM20.71 7.04c.39-.39.39-1.02 0-1.41l-2.34-2.34c-.39-.39-1.02-.39-1.41 0l-1.83 1.83 3.75 3.75 1.83-1.83z"/></svg><svg style="position:absolute;left:0;top:0" width="1917" height="460"><path fill="#FD7466" d="M1865.4 424.2h3.4a1 1 0 0 1 1 .7h4.2v2.2h-13.8v-2.2h4.2a1 1 0 0 1 1-.7z M1861 427.8h12.2v11.4a1.8 1.8 0 0 1-1.8 1.8h-8.6a1.8 1.8 0 0 1-1.8-1.8z"/></svg>
</body></html>
